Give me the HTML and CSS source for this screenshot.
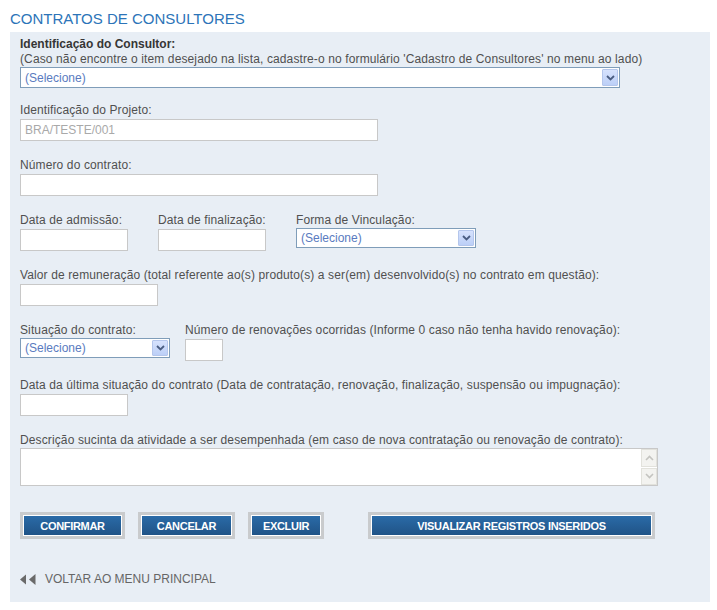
FILE: index.html
```html
<!DOCTYPE html>
<html lang="pt">
<head>
<meta charset="utf-8">
<title>Contratos de Consultores</title>
<link rel="stylesheet" href="styles.css">
</head>
<body>
<h1 class="title">CONTRATOS DE CONSULTORES</h1>
<div class="panel">
  <div class="lbl lbl-bold">Identificação do Consultor:</div>
  <div class="lbl">(Caso não encontre o item desejado na lista, cadastre-o no formulário 'Cadastro de Consultores' no menu ao lado)</div>
  <div class="select select-full">
    <span class="sel-text">(Selecione)</span>
    <span class="sel-arrow"><svg width="9" height="6" viewBox="0 0 9 6"><path d="M1 1 L4.5 4.5 L8 1" fill="none" stroke="#4a5d82" stroke-width="1.8"/></svg></span>
  </div>

  <div class="field">
    <div class="lbl">Identificação do Projeto:</div>
    <div class="input input-wide input-ro">BRA/TESTE/001</div>
  </div>

  <div class="field">
    <div class="lbl">Número do contrato:</div>
    <div class="input input-wide"></div>
  </div>

  <div class="field row row-dates">
    <div class="col">
      <div class="lbl">Data de admissão:</div>
      <div class="input input-date"></div>
    </div>
    <div class="col">
      <div class="lbl">Data de finalização:</div>
      <div class="input input-date"></div>
    </div>
    <div class="col">
      <div class="lbl">Forma de Vinculação:</div>
      <div class="select select-forma">
        <span class="sel-text">(Selecione)</span>
        <span class="sel-arrow sel-arrow-sm"><svg width="9" height="6" viewBox="0 0 9 6"><path d="M1 1 L4.5 4.5 L8 1" fill="none" stroke="#4a5d82" stroke-width="1.8"/></svg></span>
      </div>
    </div>
  </div>

  <div class="field">
    <div class="lbl">Valor de remuneração (total referente ao(s) produto(s) a ser(em) desenvolvido(s) no contrato em questão):</div>
    <div class="input input-valor"></div>
  </div>

  <div class="field row row-sit">
    <div class="col">
      <div class="lbl">Situação do contrato:</div>
      <div class="select select-sit">
        <span class="sel-text">(Selecione)</span>
        <span class="sel-arrow sel-arrow-sm"><svg width="9" height="6" viewBox="0 0 9 6"><path d="M1 1 L4.5 4.5 L8 1" fill="none" stroke="#4a5d82" stroke-width="1.8"/></svg></span>
      </div>
    </div>
    <div class="col">
      <div class="lbl">Número de renovações ocorridas (Informe 0 caso não tenha havido renovação):</div>
      <div class="input input-num"></div>
    </div>
  </div>

  <div class="field">
    <div class="lbl">Data da última situação do contrato (Data de contratação, renovação, finalização, suspensão ou impugnação):</div>
    <div class="input input-date"></div>
  </div>

  <div class="field">
    <div class="lbl">Descrição sucinta da atividade a ser desempenhada (em caso de nova contratação ou renovação de contrato):</div>
    <div class="textarea">
      <div class="scrollbar">
        <span class="sb-btn"><svg width="9" height="6" viewBox="0 0 9 6"><path d="M1 5 L4.5 1.5 L8 5" fill="none" stroke="#c4c4c0" stroke-width="1.6"/></svg></span>
        <span class="sb-btn"><svg width="9" height="6" viewBox="0 0 9 6"><path d="M1 1 L4.5 4.5 L8 1" fill="none" stroke="#c4c4c0" stroke-width="1.6"/></svg></span>
      </div>
    </div>
  </div>

  <div class="buttons">
    <button class="btn btn-confirmar">CONFIRMAR</button>
    <button class="btn btn-cancelar">CANCELAR</button>
    <button class="btn btn-excluir">EXCLUIR</button>
    <button class="btn btn-visualizar">VISUALIZAR REGISTROS INSERIDOS</button>
  </div>

  <a class="back" href="#">
    <svg class="back-icon" width="17" height="11" viewBox="0 0 17 11"><path d="M0 5.5 L6 0.5 L6 10.5 Z" fill="#6a6a6a"/><path d="M9 5.5 L15.5 0 L15.5 11 Z" fill="#6a6a6a"/></svg>
    <span>VOLTAR AO MENU PRINCIPAL</span>
  </a>
</div>
</body>
</html>
```
FILE: styles.css
```css
html, body {
  margin: 0;
  padding: 0;
  background: #ffffff;
}
body {
  font-family: "Liberation Sans", Arial, sans-serif;
  font-size: 12px;
  color: #505050;
}
.title {
  margin: 0;
  padding: 10px 0 5px 10px;
  font-size: 15px;
  line-height: 17px;
  font-weight: normal;
  color: #2c74b8;
}
.panel {
  margin-left: 10px;
  width: 680px;
  padding: 5px 10px 15px 10px;
  background: #e8eef5;
}
.lbl {
  line-height: 15px;
  white-space: nowrap;
  letter-spacing: 0.12px;
}
.lbl-bold {
  font-weight: bold;
  color: #363636;
  letter-spacing: 0;
}
.field {
  margin-top: 17px;
}
.select-full + .field {
  margin-top: 15px;
}
.row {
  display: flex;
  align-items: flex-start;
}
.row-dates {
  gap: 30px;
}
.row-sit {
  gap: 15px;
}
.input {
  box-sizing: border-box;
  height: 22px;
  margin-top: 1px;
  border: 1px solid #c8c8c8;
  background: #ffffff;
  padding: 0 4px;
  line-height: 20px;
}
.input-wide { width: 358px; }
.input-ro { color: #a9a9a9; }
.input-date { width: 108px; }
.input-valor { width: 138px; }
.input-num { width: 38px; }

.select {
  box-sizing: border-box;
  display: flex;
  align-items: center;
  justify-content: space-between;
  height: 20px;
  border: 1px solid #7f9db9;
  background: #ffffff;
  padding: 0 1px 0 4px;
}
.select-full { width: 600px; height: 21px; }
.select-forma { width: 180px; }
.select-sit { width: 150px; }
.sel-text {
  color: #5a7bc0;
  line-height: 18px;
}
.sel-arrow {
  box-sizing: border-box;
  width: 16px;
  height: 17px;
  display: flex;
  align-items: center;
  justify-content: center;
  border: 1px solid #b4c6ec;
  background: linear-gradient(#d6e2fd, #bccff7);
  border-radius: 1px;
}
.sel-arrow-sm { height: 16px; }

.textarea {
  box-sizing: border-box;
  width: 638px;
  height: 38px;
  border: 1px solid #c8c8c8;
  background: #ffffff;
  display: flex;
  justify-content: flex-end;
  padding: 0;
}
.scrollbar {
  width: 16px;
  display: flex;
  flex-direction: column;
  gap: 1px;
}
.sb-btn {
  box-sizing: border-box;
  flex: 1;
  display: flex;
  align-items: center;
  justify-content: center;
  background: #f3f3f0;
  border: 1px solid #e2e2dc;
}

.buttons {
  display: flex;
  margin-top: 26px;
  gap: 13px;
}
.btn {
  box-sizing: border-box;
  height: 27px;
  border: 3px solid #c9cbcd;
  outline: none;
  padding: 0;
  background: linear-gradient(#2b6ca9, #1f5285);
  box-shadow: inset 0 0 0 1px #ffffff;
  color: #ffffff;
  font-family: "Liberation Sans", Arial, sans-serif;
  font-size: 11px;
  font-weight: bold;
  letter-spacing: -0.3px;
  cursor: pointer;
}
.btn-confirmar { width: 105px; }
.btn-cancelar { width: 97px; }
.btn-excluir { width: 76px; }
.btn-visualizar { width: 287px; margin-left: 31px; }

.back {
  display: flex;
  align-items: center;
  gap: 8px;
  margin-top: 33px;
  line-height: 15px;
  color: #666666;
  text-decoration: none;
}
.back-icon {
  flex: none;
}
```
